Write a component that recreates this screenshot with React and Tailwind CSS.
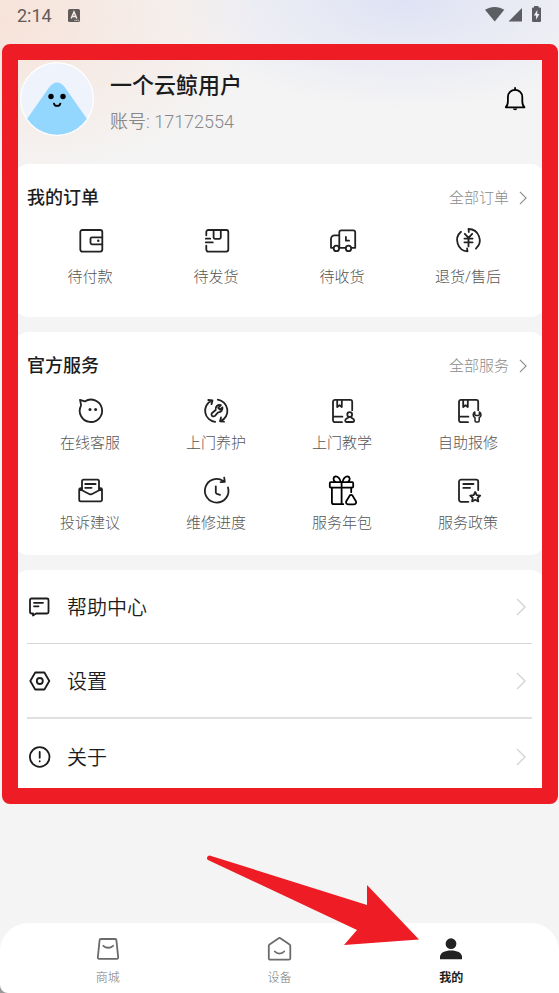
const orders = [
    { label: "待付款", icon: <WalletIcon /> },
    { label: "待发货", icon: <ParcelIcon /> },
    { label: "待收货", icon: <TruckIcon /> },
    { label: "退货/售后", icon: <RefundIcon /> },
];

const services = [
    { label: "在线客服", icon: <ChatIcon /> },
    { label: "上门养护", icon: <CareIcon /> },
    { label: "上门教学", icon: <TeachIcon /> },
    { label: "自助报修", icon: <RepairIcon /> },
    { label: "投诉建议", icon: <MailIcon /> },
    { label: "维修进度", icon: <ProgressIcon /> },
    { label: "服务年包", icon: <GiftIcon /> },
    { label: "服务政策", icon: <PolicyIcon /> },
];

function Icon({ children, className = "text-[#222]" }) {
    return (
        <svg
            viewBox="0 0 28 28"
            className={`size-7 shrink-0 overflow-visible ${className}`}
            fill="none"
            stroke="currentColor"
            strokeWidth="1.8"
            strokeLinecap="round"
            strokeLinejoin="round"
            aria-hidden="true"
        >
            {children}
        </svg>
    );
}

function WalletIcon() {
    return (
        <Icon>
            <rect x="4.3" y="4" width="22" height="21.6" rx="2" />
            <path d="M26.3 11.3H16a1.5 1.5 0 0 0-1.5 1.5v4a1.5 1.5 0 0 0 1.5 1.5h10.3" />
            <circle cx="22.3" cy="14.8" r="1.2" fill="currentColor" stroke="none" />
        </Icon>
    );
}

function ParcelIcon() {
    return (
        <Icon>
            <path d="M4.3 9.3V6a2 2 0 0 1 2-2h18a2 2 0 0 1 2 2v17.6a2 2 0 0 1-2 2h-18a2 2 0 0 1-2-2v-4" />
            <path d="M11.6 4v7.3a1.5 1.5 0 0 0 1.5 1.5h4.2a1.5 1.5 0 0 0 1.5-1.5V4M3.8 12.7h4.4M3.8 16.4h7" />
        </Icon>
    );
}

function TruckIcon() {
    return (
        <Icon>
            <path d="M11.3 21.8V6.3a2 2 0 0 1 2-2h11.9a2 2 0 0 1 2 2v15.5h-3.6M17.4 21.8h-6.1M11.3 9.3H6.6a3.6 3.6 0 0 0-3.6 3.6v8.9h2.2" />
            <circle cx="8.4" cy="22.4" r="2.7" />
            <circle cx="20.5" cy="22.4" r="2.7" />
            <path d="M17.9 11v3.7h3.2" />
        </Icon>
    );
}

function RefundIcon() {
    return (
        <Icon>
            <path d="M7 5.8A11.2 11.2 0 0 0 13.5 25.4l-.4-2.9M14.8 6l-.3-3A11.2 11.2 0 0 1 21.9 22.6" />
            <path d="M10.8 7.8l3.7 4 3.7-4M14.5 11.8v8.6M10.4 12.6h8.2M10.4 16.3h8.2" />
        </Icon>
    );
}

function ChatIcon() {
    return (
        <Icon>
            <path d="M5 7.6L4 2.8l4.8 1.6A11.2 11.2 0 1 1 5 8.6z" />
            <circle cx="14" cy="12.5" r="1.5" fill="currentColor" stroke="none" />
            <circle cx="19.6" cy="12.5" r="1.5" fill="currentColor" stroke="none" />
        </Icon>
    );
}

function CareIcon() {
    return (
        <Icon>
            <path d="M13.2 24.9A11.2 11.2 0 0 1 9.6 3.6M6.3 3l4.2.3-1 3.9" />
            <path d="M15.8 2.7A11.2 11.2 0 0 1 18.8 24M22 24.6l-4-.2 1-4" />
            <path d="M18.9 8.2a4 4 0 0 0-5.2 4.8l-3.6 3a2 2 0 1 0 2.8 2.9l3.2-3.6a4 4 0 0 0 4.3-5l-2.4 2.2-1.8-1.7z" />
        </Icon>
    );
}

function BookShape() {
    return (
        <path d="M14 25.2H7a2 2 0 0 1-2-2V4.8a2 2 0 0 1 2-2h15.2a2 2 0 0 1 2 2v8.4M5 19.7h9.4M9.2 3v7l2.3-1.8L13.8 10V3" />
    );
}

function TeachIcon() {
    return (
        <Icon>
            <BookShape />
            <circle cx="21.7" cy="17.6" r="2.4" />
            <path d="M20.6 20c0 1.3-3.4 1-3.4 3.6 0 1 .4 1.4 1.2 1.4H25c.8 0 1.2-.4 1.2-1.4 0-2.6-3.4-2.3-3.4-3.6" />
        </Icon>
    );
}

function RepairIcon() {
    return (
        <Icon>
            <BookShape />
            <path
                strokeWidth="1.5"
                d="M20.8 15c-2.2 1.400-2.200 4.400.2 5.600v3.200a1.200 1.200 0 0 0 1.200 1.200h1.800a1.200 1.200 0 0 0 1.200-1.200v-3.200c2.400-1.200 2.400-4.200.2-5.600v2.800l-1.200.8h-2.200l-1.200-.8z"
            />
        </Icon>
    );
}

function MailIcon() {
    return (
        <Icon>
            <path d="M6 13V4.200a1.600 1.600 0 0 1 1.600-1.600h13.800A1.600 1.600 0 0 1 23 4.200V13" />
            <path d="M5.600 11.200H4.600A1.400 1.400 0 0 0 3.200 12.600v10.200A1.600 1.600 0 0 0 4.800 24.400h19.600a1.600 1.600 0 0 0 1.600-1.600V12.600a1.400 1.400 0 0 0-1.400-1.400h-1M3.600 12l10 5.200c.7.3 1.300.3 2 0l10-5.200" />
            <path d="M9.200 7h10.400M9.200 10.800h6.400" />
        </Icon>
    );
}

function ProgressIcon() {
    return (
        <Icon>
            <path d="M26 10.400A11.800 11.800 0 1 1 21.300 4M22.200.6l.6 4.200-4.200.4" />
            <path d="M13.800 9.300v6c0 1 .4 1.300 1.200 1.600l3 1" />
        </Icon>
    );
}

function GiftIcon() {
    return (
        <Icon className="text-black">
            <rect x="1.800" y="5.200" width="23.400" height="5.400" rx="1" />
            <path d="M3.900 10.600v14.600a2 2 0 0 0 2 2h9.400M23.200 10.600v4.600M13.600 5.200v22" />
            <path d="M12.600 5C12.200 1.600 9.800-.8 7.400-.5 5-.1 4.800 3.200 7.200 5M14.600 5C15 1.600 17.400-.8 19.800-.5 22.200-.1 22.400 3.200 20 5" />
            <path d="M21.700 18.600a1.700 1.700 0 0 1 2.800 0l3.400 5.700a2 2 0 0 1-1.700 3h-6.200a2 2 0 0 1-1.700-3z" />
        </Icon>
    );
}

function PolicyIcon() {
    return (
        <Icon>
            <path d="M14.400 24.800H7a2 2 0 0 1-2-2V4.700a2 2 0 0 1 2-2h15.200a2 2 0 0 1 2 2v8.300M9.300 7h10.200M9.300 10.900H16" />
            <path d="M21.200 15l1.500 3.100 3.500.5-2.500 2.400.6 3.400-3.100-1.600-3.100 1.600.6-3.400-2.500-2.400 3.500-.5z" />
        </Icon>
    );
}

function Chevron({ className }) {
    return (
        <svg viewBox="0 0 10 18" className={className} fill="none" stroke="currentColor" strokeWidth="1.400" aria-hidden="true">
            <path d="M1 1l8 8-8 8" />
        </svg>
    );
}

function StatusBar() {
    return (
        <div className="flex h-8 items-center pl-[17px] pr-[18px] font-['Roboto'] text-lg text-[#605b59]">
            <span>2:14</span>
            <svg viewBox="0 0 12 13" className="ml-4 mb-0.5 h-[13px] w-3" aria-hidden="true">
                <rect width="12" height="13" rx="1.500" fill="#605b59" />
                <path d="M3.200 9.500L6 3l2.800 6.500M4.200 7.500h3.600" fill="none" stroke="#f5e9e2" strokeWidth="1.500" />
                <path d="M6.500 11.300h4.500" stroke="#f5e9e2" strokeDasharray="1 .7" />
            </svg>
            <svg viewBox="0 0 56 16" className="ml-auto mb-1 h-4 w-14" fill="#5c5e63" aria-hidden="true">
                <path d="M0 3.800C5.500-.1 14-.1 19.300 3.800L9.700 15.600z" />
                <path d="M23.500 15.600L37 2v13.600z" />
                <path d="M49 1.500V0h4.500v1.500H55a1 1 0 0 1 1 1V15a1 1 0 0 1-1 1h-7a1 1 0 0 1-1-1V2.500a1 1 0 0 1 1-1z" />
                <path d="M52.300 4l-3.500 5.400h2.300v4.300l3.300-5.800h-2.100z" fill="#f0f1f6" />
            </svg>
        </div>
    );
}

function Avatar() {
    return (
        <svg viewBox="0 0 74 74" className="size-[74px] shrink-0" aria-hidden="true">
            <clipPath id="face">
                <circle cx="37" cy="37" r="35.800" />
            </clipPath>
            <circle cx="37" cy="37" r="37" fill="#fff" />
            <g clipPath="url(#face)">
                <rect width="74" height="74" fill="#eef3fc" />
                <path d="M7 57L29 25.500Q37 15.500 45 25.500L67 57v17H7z" fill="#94d7fe" />
            </g>
            <circle cx="31" cy="34.500" r="2.700" />
            <circle cx="43" cy="34.500" r="2.700" />
            <path d="M33.800 40.800c.5 4.200 6.200 4.200 6.700 0" fill="none" stroke="#000" strokeWidth="1.700" />
        </svg>
    );
}

function Profile() {
    return (
        <header className="flex h-[120px] items-start pl-[7px] pr-[17px] pt-[18px]">
            <Avatar />
            <div className="ml-4 mt-2">
                <h1 className="text-[22px] font-medium leading-8 text-[#1c1c1c]">一个云鲸用户</h1>
                <p className="mt-2 text-lg font-[350] leading-6 text-[#888]">账号: 17172554</p>
            </div>
            <button type="button" aria-label="消息" className="ml-auto mt-[23px]">
                <Icon className="text-black">
                    <path d="M4.800 22.300c1.900-1.600 2.100-3 2.100-6v-4.300a7.200 7.200 0 0 1 14.400 0v4.300c0 3 .2 4.400 2.100 6z" />
                    <path d="M14.100 2.800v2" />
                    <path d="M11.800 23.600a2.400 2.400 0 0 0 4.600 0z" fill="currentColor" stroke="none" />
                </Icon>
            </button>
        </header>
    );
}

function CardHeader({ title, more }) {
    return (
        <div className="flex items-center justify-between">
            <h2 className="text-lg font-medium leading-7 text-[#1c1c1c]">{title}</h2>
            <a href="#" className="flex items-center gap-2.5 pr-1 text-[15px] font-light leading-5 text-[#8c8c8c]">
                {more}
                <Chevron className="h-[14px] w-2" />
            </a>
        </div>
    );
}

function Entry({ item, gap }) {
    return (
        <a href="#" className={`flex flex-col items-center text-[15px] font-light leading-5 text-[#555] ${gap}`}>
            {item.icon}
            <span>{item.label}</span>
        </a>
    );
}

function MenuRow({ label, icon, className }) {
    return (
        <a href="#" className={`flex items-center gap-4 text-xl font-[350] text-[#1c1c1c] ${className}`}>
            <svg
                viewBox="0 0 24 24"
                className="size-6"
                fill="none"
                stroke="currentColor"
                strokeWidth="1.800"
                strokeLinecap="round"
                strokeLinejoin="round"
                aria-hidden="true"
            >
                {icon}
            </svg>
            <span className="pt-0.5">{label}</span>
            <Chevron className="ml-auto mr-1.5 h-[18px] w-2.5 text-[#d4d4d4]" />
        </a>
    );
}

function Tab({ label, active, children }) {
    return (
        <a
            href="#"
            aria-current={active ? "page" : undefined}
            className={`flex flex-col items-center gap-[7px] text-xs leading-4 ${active ? "font-bold text-[#1c1c1c]" : "font-light text-[#777]"}`}
        >
            {children}
            <span>{label}</span>
        </a>
    );
}

function TabBar() {
    return (
        <footer className="mt-auto bg-[linear-gradient(to_top,#999_8px,#f4f4f4_8px)]">
            <nav className="relative grid grid-cols-3 rounded-t-[28px] rounded-bl-lg bg-white px-[22px] pb-[7px] pt-3">
                <Tab label="商城">
                    <Icon className="text-[#6b6b6b]">
                        <path d="M6.800 4h14.400a1.200 1.200 0 0 1 1.200 1.100l1.800 17.500a1.200 1.200 0 0 1-1.200 1.300H5a1.200 1.200 0 0 1-1.200-1.300L5.600 5.100A1.200 1.200 0 0 1 6.800 4zM9.300 10.800c2.800 2.600 7 2.600 9.800 0" />
                    </Icon>
                </Tab>
                <Tab label="设备">
                    <Icon className="text-[#6b6b6b]">
                        <path d="M3.800 10.800a1.500 1.500 0 0 1 .7-1.300l9.200-6.200a1.500 1.500 0 0 1 1.700 0l9.200 6.200a1.500 1.500 0 0 1 .7 1.300v12.400a1.500 1.500 0 0 1-1.500 1.500H5.300a1.500 1.500 0 0 1-1.500-1.500zM9.800 16.500c2.600 2.700 6.800 2.700 9.400 0" />
                    </Icon>
                </Tab>
                <Tab label="我的" active>
                    <Icon>
                        <g fill="currentColor" stroke="none">
                            <circle cx="14" cy="8.700" r="5.400" />
                            <path d="M3 24.300v-2.500c0-4.200 5-6.400 11-6.400s11 2.200 11 6.400v2.500z" />
                        </g>
                    </Icon>
                </Tab>

                <svg viewBox="0 0 213 92" className="pointer-events-none absolute -top-[68px] right-[140px] h-[92px] w-[213px]" aria-hidden="true">
                    <path d="M3.500 0.500L161 50V30L213 84.500 138 90l13-15L2 5A2.500 2.500 0 0 1 3.500.500z" fill="#ee1c24" />
                </svg>
            </nav>
        </footer>
    );
}

export default function App() {
    return (
        <div className="flex min-h-screen flex-col bg-[#f4f4f4] bg-[radial-gradient(ellipse_260px_160px_at_0px_20px,#f7e3d9,transparent),radial-gradient(ellipse_240px_110px_at_405px_0px,#dfe2f4,transparent)] font-['Roboto','Noto_Sans_CJK_SC',sans-serif]">
            <StatusBar />

            <main className="relative mt-3 px-[13px] pb-2.5">
                <Profile />

                <section className="rounded-2xl bg-white pb-[30px] pl-3.5 pr-[15px] pt-5">
                    <CardHeader title="我的订单" more="全部订单" />
                    <div className="mt-3.5 grid grid-cols-4">
                        {orders.map((item) => (
                            <Entry key={item.label} item={item} gap="gap-[13px]" />
                        ))}
                    </div>
                </section>

                <section className="mt-[15px] rounded-2xl bg-white pb-[22px] pl-3.5 pr-[15px] pt-5">
                    <CardHeader title="官方服务" more="全部服务" />
                    <div className="mt-[17px] grid grid-cols-4 gap-y-6">
                        {services.map((item) => (
                            <Entry key={item.label} item={item} gap="gap-2" />
                        ))}
                    </div>
                </section>

                <section className="mt-[15px] rounded-2xl bg-white px-3.5">
                    <MenuRow
                        label="帮助中心"
                        className="h-[74px] border-b border-[#d6d6d6]"
                        icon={<path d="M4.500 3.500h15.500A1.500 1.500 0 0 1 21.500 5v12a1.500 1.500 0 0 1-1.500 1.500H9L6 20.500V18.500H4.500A1.500 1.500 0 0 1 3 17V5A1.500 1.500 0 0 1 4.500 3.500zM7 7.800h9M7 11.300h4.500" />}
                    />
                    <MenuRow
                        label="设置"
                        className="h-[75px] border-b-2 border-[#e0e0e0]"
                        icon={
                            <>
                                <path d="M8.200 3.500h9.200L22.300 12l-4.900 8.500H8.200L3.300 12z" />
                                <circle cx="12.800" cy="12" r="3" />
                            </>
                        }
                    />
                    <MenuRow
                        label="关于"
                        className="h-[75px]"
                        icon={
                            <>
                                <circle cx="12.700" cy="12" r="9.800" />
                                <path d="M12.700 7v5.800M12.700 16.200v.2" />
                            </>
                        }
                    />
                </section>

                <div className="pointer-events-none absolute inset-y-0 left-0.5 right-px rounded-lg border-[16px] border-[#ee1c24]" />
            </main>

            <TabBar />
        </div>
    );
}
